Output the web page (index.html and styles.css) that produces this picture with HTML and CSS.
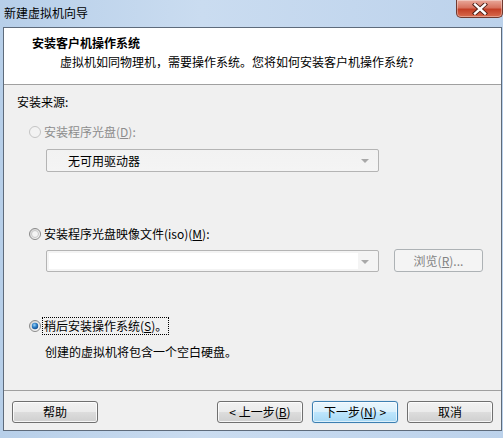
FILE: index.html
```html
<!DOCTYPE html>
<html lang="zh-CN">
<head>
    <meta charset="UTF-8">
    <title>新建虚拟机向导</title>
    <link rel="stylesheet" href="styles.css">
</head>
<body>

<div class="window">
    <div class="titlebar">
        <span class="title">新建虚拟机向导</span>
        <button class="close-btn" type="button">
            <svg width="16" height="12" viewBox="0 0 16 12">
                <path d="M3 1.5 L13 10.5 M13 1.5 L3 10.5" stroke="#4a1c14" stroke-width="4.2" stroke-linecap="square"/>
                <path d="M3 1.5 L13 10.5 M13 1.5 L3 10.5" stroke="#ffffff" stroke-width="2.4" stroke-linecap="square"/>
            </svg>
        </button>
    </div>

    <div class="client">
        <div class="header">
            <div class="header-title">安装客户机操作系统</div>
            <div class="header-sub">虚拟机如同物理机，需要操作系统。您将如何安装客户机操作系统?</div>
        </div>

        <div class="content">
            <div class="group-label">安装来源:</div>

            <!-- option 1: disabled -->
            <div class="radio-row disabled row-cd">
                <svg class="radio" width="12" height="12" viewBox="0 0 12 12">
                    <circle cx="6" cy="6" r="5.5" fill="#f2f2f2" stroke="#c4c4c4"/>
                </svg>
                <span>安装程序光盘(<u>D</u>):</span>
            </div>
            <div class="combo combo-drive">
                <span class="combo-text">无可用驱动器</span>
                <span class="combo-arrow"></span>
            </div>

            <!-- option 2 -->
            <div class="radio-row row-iso">
                <svg class="radio" width="12" height="12" viewBox="0 0 12 12">
                    <defs>
                        <linearGradient id="rfill" x1="0" y1="0" x2="1" y2="1">
                            <stop offset="0" stop-color="#d0d0d0"/>
                            <stop offset="1" stop-color="#ffffff"/>
                        </linearGradient>
                    </defs>
                    <circle cx="6" cy="6" r="5.5" fill="url(#rfill)" stroke="#8a8a8a"/>
                    <circle cx="6" cy="6" r="3.5" fill="#f4f4f4" stroke="#c8c8c8"/>
                </svg>
                <span>安装程序光盘映像文件(iso)(<u>M</u>):</span>
            </div>
            <div class="iso-line">
                <div class="combo combo-iso">
                    <span class="combo-field"></span>
                    <span class="combo-arrow"></span>
                </div>
                <button class="btn btn-disabled browse-btn" type="button">浏览(<u>R</u>)...</button>
            </div>

            <!-- option 3: checked -->
            <div class="radio-row row-later">
                <svg class="radio" width="12" height="12" viewBox="0 0 12 12">
                    <defs>
                        <radialGradient id="rdot" cx="0.4" cy="0.35" r="0.7">
                            <stop offset="0" stop-color="#9fd3f7"/>
                            <stop offset="0.5" stop-color="#2d7fc6"/>
                            <stop offset="1" stop-color="#134a8a"/>
                        </radialGradient>
                    </defs>
                    <circle cx="6" cy="6" r="5.5" fill="url(#rfill)" stroke="#8a8a8a"/>
                    <circle cx="6" cy="6" r="3.2" fill="url(#rdot)"/>
                </svg>
                <span class="focus">稍后安装操作系统(<u>S</u>)。</span>
            </div>
            <div class="later-note">创建的虚拟机将包含一个空白硬盘。</div>
        </div>

        <div class="footer">
            <button class="btn" type="button">帮助</button>
            <div class="nav-buttons">
                <button class="btn" type="button">&lt; 上一步(<u>B</u>)</button>
                <button class="btn btn-default" type="button">下一步(<u>N</u>) &gt;</button>
                <button class="btn" type="button">取消</button>
            </div>
        </div>
    </div>
</div>

</body>
</html>
```

FILE: styles.css
```css
body {
    margin: 0;
    padding: 0;
    font-family: "Noto Sans CJK SC", "Noto Sans", sans-serif;
    font-size: 12px;
    line-height: 16px;
    color: #000;
}

.window {
    width: 503px;
    height: 438px;
    display: flex;
    flex-direction: column;
    background: linear-gradient(90deg, #b7cfe9 0%, #cadcf0 40%, #c3d7ee 70%, #bcd2eb 100%);
    box-sizing: border-box;
    padding: 0 1px 7px 3px;
}

/* title bar */
.titlebar {
    height: 27px;
    display: flex;
    justify-content: space-between;
    align-items: flex-start;
    margin-left: -3px;
}

.title {
    margin: 5px 0 0 4px;
    color: #000;
}

.close-btn {
    width: 47px;
    height: 18px;
    margin: 0 -1px 0 0;
    padding: 0;
    border: 1px solid #6f3a30;
    border-top: none;
    border-radius: 0 0 5px 5px;
    background: linear-gradient(#e9a99b 0%, #d7725e 45%, #c33f26 55%, #d86b4e 100%);
    box-shadow: inset 0 0 0 1px rgba(255, 255, 255, 0.35);
    display: flex;
    align-items: center;
    justify-content: center;
}

/* client area */
.client {
    flex: 1;
    display: flex;
    flex-direction: column;
    border: 1px solid #5e6b7b;
    background-color: #f0f0f0;
}

.header {
    height: 56px;
    background-color: #fff;
    border-bottom: 1px solid #a0a0a0;
    box-sizing: content-box;
}

.header-title {
    font-weight: bold;
    margin: 7px 0 0 28px;
}

.header-sub {
    margin: 3px 0 0 56px;
}

.content {
    flex: 1;
    padding-left: 13px;
}

.group-label {
    margin-top: 9px;
}

.radio-row {
    display: flex;
    align-items: center;
    height: 16px;
    margin-left: 12px;
}

.radio {
    margin-right: 3px;
    flex: none;
}

.radio-row.disabled {
    color: #8d8d8d;
}

.row-cd {
    margin-top: 14px;
}

.row-iso {
    margin-top: 54px;
}

.row-later {
    margin-top: 46px;
}

.focus {
    outline: 1px dotted #000;
    outline-offset: 0;
    padding: 0 1px;
    margin-left: -1px;
}

.later-note {
    margin: 10px 0 0 28px;
}

/* combo boxes */
.combo {
    margin-left: 29px;
    width: 333px;
    box-sizing: border-box;
    border: 1px solid #b4b4b4;
    border-radius: 2px;
    display: flex;
    align-items: center;
}

.combo-drive {
    height: 23px;
    margin-top: 9px;
    background: linear-gradient(#f2f2f2, #f4f4f4);
}

.combo-text {
    flex: 1;
    padding-left: 21px;
}

.combo-arrow {
    width: 0;
    height: 0;
    border-left: 4px solid transparent;
    border-right: 4px solid transparent;
    border-top: 4px solid #a8a8a8;
    margin: 1px 9px 0 0;
}

.iso-line {
    display: flex;
    align-items: flex-end;
    margin-top: 7px;
}

.combo-iso {
    height: 22px;
    background-color: #f4f4f4;
    padding: 2px 0 2px 2px;
}

.combo-field {
    flex: 1;
    align-self: stretch;
    background-color: #fff;
    margin-right: 3px;
}

/* push buttons */
.btn {
    width: 86px;
    height: 22px;
    padding: 0;
    border: 1px solid #707070;
    border-radius: 3px;
    background: linear-gradient(#f2f2f2 0%, #ebebeb 50%, #dddddd 51%, #cfcfcf 100%);
    box-shadow: inset 0 0 0 1px rgba(255, 255, 255, 0.8);
    font-family: inherit;
    font-size: 12px;
    line-height: 16px;
    color: #000;
    text-align: center;
}

.btn-default {
    border-color: #3c7fb1;
    background: linear-gradient(#eaf6fd 0%, #d9f0fc 50%, #bee6fd 51%, #a7d9f5 100%);
    box-shadow: inset 0 0 0 1px rgba(255, 255, 255, 0.6), 0 0 1px #7fc3ee;
}

.btn-disabled {
    border-color: #adb2b5;
    background: #f4f4f4;
    box-shadow: none;
    color: #838383;
}

.browse-btn {
    width: 89px;
    height: 23px;
    margin-left: 15px;
}

.footer {
    height: 40px;
    border-top: 1px solid #a0a0a0;
    display: flex;
    justify-content: space-between;
    align-items: flex-start;
    padding: 10px 8px 0 8px;
    box-sizing: border-box;
}

.nav-buttons {
    display: flex;
    gap: 9px;
}
```
